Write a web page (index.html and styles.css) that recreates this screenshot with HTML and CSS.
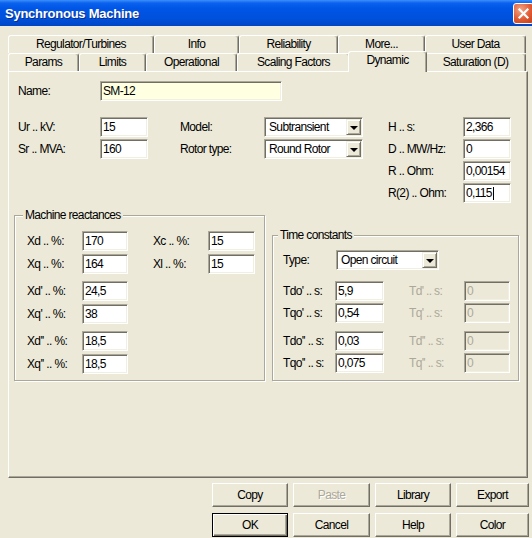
FILE: index.html
```html
<!DOCTYPE html>
<html lang="en">
<head>
    <meta charset="UTF-8">
    <title>Synchronous Machine</title>
    <link rel="stylesheet" href="styles.css">
</head>
<body>
    <div class="titlebar">
        <span class="title">Synchronous Machine</span>
        <span class="close">
            <svg width="13" height="13" viewBox="0 0 13 13">
                <path d="M2.5 2.5 L10.5 10.5 M10.5 2.5 L2.5 10.5" stroke="#fff" stroke-width="2.2" stroke-linecap="square"/>
            </svg>
        </span>
    </div>

    <div class="tabs">
        <div class="tab-row">
            <div class="tab t-regulator">Regulator/Turbines</div>
            <div class="tab t-info">Info</div>
            <div class="tab t-reliability">Reliability</div>
            <div class="tab t-more">More...</div>
            <div class="tab t-userdata">User Data</div>
        </div>
        <div class="tab-row">
            <div class="tab t-params">Params</div>
            <div class="tab t-limits">Limits</div>
            <div class="tab t-operational">Operational</div>
            <div class="tab t-scaling">Scaling Factors</div>
            <div class="tab t-dynamic active">Dynamic</div>
            <div class="tab t-saturation">Saturation (D)</div>
        </div>
    </div>

    <div class="panel">
        <div class="name-row">
            <label>Name:</label>
            <input class="field name" type="text" value="SM-12">
        </div>

        <div class="top">
            <div class="col col-a">
                <label>Ur .. kV:</label>
                <input class="field" type="text" value="15">
                <label>Sr .. MVA:</label>
                <input class="field" type="text" value="160">
            </div>
            <div class="col col-b">
                <label>Model:</label>
                <div class="combo"><span>Subtransient</span><span class="combo-btn"></span></div>
                <label>Rotor type:</label>
                <div class="combo"><span>Round Rotor</span><span class="combo-btn"></span></div>
            </div>
            <div class="col col-c">
                <label>H .. s:</label>
                <input class="field" type="text" value="2,366">
                <label>D .. MW/Hz:</label>
                <input class="field" type="text" value="0">
                <label>R .. Ohm:</label>
                <input class="field" type="text" value="0,00154">
                <label>R(2) .. Ohm:</label>
                <div class="caret-wrap">
                    <input class="field" type="text" value="0,115">
                    <span class="caret"></span>
                </div>
            </div>
        </div>

        <div class="groups">
            <div class="group group-left">
                <div class="group-title">Machine reactances</div>
                <div class="pair x-pair">
                    <label>Xd .. %:</label>
                    <input class="field" type="text" value="170">
                    <label class="second">Xc .. %:</label>
                    <input class="field" type="text" value="15">
                    <label>Xq .. %:</label>
                    <input class="field" type="text" value="164">
                    <label class="second">Xl .. %:</label>
                    <input class="field" type="text" value="15">
                </div>
                <div class="pair x-pair">
                    <label>Xd' .. %:</label>
                    <input class="field" type="text" value="24,5">
                    <span></span><span></span>
                    <label>Xq' .. %:</label>
                    <input class="field" type="text" value="38">
                </div>
                <div class="pair x-pair">
                    <label>Xd'' .. %:</label>
                    <input class="field" type="text" value="18,5">
                    <span></span><span></span>
                    <label>Xq'' .. %:</label>
                    <input class="field" type="text" value="18,5">
                </div>
            </div>

            <div class="group group-right">
                <div class="group-title">Time constants</div>
                <div class="type-row">
                    <label>Type:</label>
                    <div class="combo"><span>Open circuit</span><span class="combo-btn"></span></div>
                </div>
                <div class="pair t-pair">
                    <label>Tdo' .. s:</label>
                    <input class="field" type="text" value="5,9">
                    <label class="second off">Td' .. s:</label>
                    <input class="field" type="text" value="0" disabled>
                    <label>Tqo' .. s:</label>
                    <input class="field" type="text" value="0,54">
                    <label class="second off">Tq' .. s:</label>
                    <input class="field" type="text" value="0" disabled>
                </div>
                <div class="pair t-pair">
                    <label>Tdo'' .. s:</label>
                    <input class="field" type="text" value="0,03">
                    <label class="second off">Td'' .. s:</label>
                    <input class="field" type="text" value="0" disabled>
                    <label>Tqo'' .. s:</label>
                    <input class="field" type="text" value="0,075">
                    <label class="second off">Tq'' .. s:</label>
                    <input class="field" type="text" value="0" disabled>
                </div>
            </div>
        </div>
    </div>

    <div class="buttons">
        <button class="btn">Copy</button>
        <button class="btn" disabled>Paste</button>
        <button class="btn">Library</button>
        <button class="btn">Export</button>
        <button class="btn default">OK</button>
        <button class="btn">Cancel</button>
        <button class="btn">Help</button>
        <button class="btn">Color</button>
    </div>
</body>
</html>
```

FILE: styles.css
```css
* {
    box-sizing: border-box;
}

body {
    margin: 0;
    width: 532px;
    height: 538px;
    overflow: hidden;
    background: #ece9d8;
    font-family: "Liberation Sans", Arial, sans-serif;
    font-size: 12px;
    letter-spacing: -0.65px;
    color: #000;
}

/* title bar */
.titlebar {
    height: 26px;
    display: flex;
    align-items: center;
    justify-content: space-between;
    padding-left: 5px;
    background: linear-gradient(to bottom, #3d8ff9 0px, #0b62ee 3px, #0056e6 8px, #0051dc 18px, #0046c6 26px);
}

.title {
    color: #fff;
    font-weight: bold;
    font-size: 13px;
    letter-spacing: -0.25px;
    text-shadow: 1px 1px 0 #0b2f8f;
}

.close {
    width: 21px;
    height: 21px;
    margin-right: -2px;
    border: 1px solid #fff;
    border-radius: 3px;
    background: radial-gradient(circle at 35% 30%, #f3a486, #e05a32 55%, #c23c18);
    display: flex;
    align-items: center;
    justify-content: center;
}

/* tabs */
.tabs {
    margin: 9px 0 0 8px;
    width: 520px;
}

.tab-row {
    display: flex;
    height: 18px;
}

.tab {
    height: 18px;
    line-height: 17px;
    text-align: center;
    white-space: nowrap;
    background: #ece9d8;
    border-top: 1px solid #fff;
    border-left: 1px solid #fff;
    border-right: 1px solid #716f64;
    border-radius: 3px 3px 0 0;
    box-shadow: inset -1px 0 0 #aca899;
}

.t-regulator { width: 146px; }
.t-info { width: 85px; }
.t-reliability { width: 99px; }
.t-more { width: 87px; }
.t-userdata { width: 101px; }

.t-params { width: 71px; }
.t-limits { width: 67px; }
.t-operational { width: 91px; }
.t-scaling { width: 113px; }
.t-dynamic { width: 75px; }
.t-saturation { width: 101px; }

.tab.active {
    height: 21px;
    margin: -2px -2px 0;
    width: 79px;
    line-height: 16px;
    z-index: 2;
}

/* main page */
.panel {
    margin-left: 8px;
    width: 520px;
    height: 407px;
    border: 1px solid;
    border-color: #fff #716f64 #716f64 #fff;
    box-shadow: inset -1px -1px 0 #aca899;
    padding: 9px 0 0 5px;
}

label {
    white-space: nowrap;
}

.field {
    display: block;
    width: 100%;
    height: 20px;
    margin: 0;
    padding: 0 2px 0 2px;
    font: inherit;
    letter-spacing: inherit;
    color: #000;
    background: #fff;
    border: 1px solid;
    border-color: #aca899 #fff #fff #aca899;
    box-shadow: inset 1px 1px 0 #716f64, inset -1px -1px 0 #f1efe2;
    outline: none;
}

.field:disabled {
    background: #ece9d8;
    color: #aca899;
    -webkit-text-fill-color: #aca899;
}

.field.name {
    background: #ffffe1;
}

.name-row {
    display: grid;
    grid-template-columns: 82px 182px;
    align-items: center;
    padding-left: 4px;
}

.top {
    display: flex;
    margin-top: 16px;
    padding-left: 4px;
}

.col {
    display: grid;
    grid-auto-rows: 20px;
    row-gap: 2px;
    align-items: center;
    align-content: start;
}

.col-a { grid-template-columns: 82px 48px; }
.col-b { grid-template-columns: 84px 99px; margin-left: 32px; }
.col-c { grid-template-columns: 75px 48px; margin-left: 25px; }

.caret-wrap {
    position: relative;
}

.caret {
    position: absolute;
    left: 30px;
    top: 4px;
    height: 13px;
    border-left: 1px solid #000;
}

/* combo box */
.combo {
    display: flex;
    align-items: center;
    height: 20px;
    padding: 0 1px 0 4px;
    background: #fff;
    border: 1px solid;
    border-color: #aca899 #fff #fff #aca899;
    box-shadow: inset 1px 1px 0 #716f64, inset -1px -1px 0 #f1efe2;
}

.combo span:first-child {
    flex: 1;
}

.combo-btn {
    width: 15px;
    height: 16px;
    background: #ece9d8;
    border: 1px solid;
    border-color: #f1efe2 #716f64 #716f64 #f1efe2;
    box-shadow: inset 1px 1px 0 #fff, inset -1px -1px 0 #aca899;
    display: flex;
    align-items: center;
    justify-content: center;
}

.combo-btn::after {
    content: "";
    border-left: 4px solid transparent;
    border-right: 4px solid transparent;
    border-top: 4px solid #000;
    margin-top: 1px;
}

/* group boxes */
.groups {
    display: flex;
    gap: 7px;
    height: 166px;
    margin-top: 12px;
}

.group {
    border: 1px solid #aca899;
    box-shadow: inset 1px 1px 0 #fff, 1px 1px 0 #fff;
}

.group-title {
    width: max-content;
    line-height: 14px;
    padding: 0 2px;
    background: #ece9d8;
}

.group-left {
    width: 251px;
    padding-left: 12px;
}

.group-left .group-title {
    margin: -8px 0 0 -4px;
}

.group-right {
    width: 247px;
    margin-top: 20px;
    padding-left: 10px;
}

.group-right .group-title {
    margin: -8px 0 0 -5px;
}

.pair {
    display: grid;
    grid-auto-rows: 20px;
    row-gap: 3px;
    align-items: center;
}

.x-pair {
    grid-template-columns: 55px 46px 80px 47px;
    margin-top: 7px;
}

.group-title + .x-pair {
    margin-top: 9px;
}

.second {
    padding-left: 25px;
}

.off {
    color: #aca899;
}

.type-row {
    display: grid;
    grid-template-columns: 53px 103px;
    align-items: center;
    margin-top: 8px;
}

.t-pair {
    grid-template-columns: 52px 49px 80px 46px;
    row-gap: 2px;
    margin-top: 8px;
}

.type-row + .t-pair {
    margin-top: 11px;
}

/* dialog buttons */
.buttons {
    display: grid;
    grid-template-columns: 76px 77px 76px 73px;
    grid-auto-rows: 24px;
    gap: 6px 5px;
    margin: 5px 0 0 212px;
}

.btn {
    font: inherit;
    letter-spacing: inherit;
    color: #000;
    background: #ece9d8;
    padding: 0;
    border: 1px solid;
    border-color: #fff #716f64 #716f64 #fff;
    box-shadow: inset -1px -1px 0 #aca899;
}

.btn.default {
    border-color: #000;
    box-shadow: inset 1px 1px 0 #fff, inset -1px -1px 0 #716f64, inset -2px -2px 0 #aca899;
}

.btn:disabled {
    color: #aca899;
    text-shadow: 1px 1px 0 #fff;
}
```
